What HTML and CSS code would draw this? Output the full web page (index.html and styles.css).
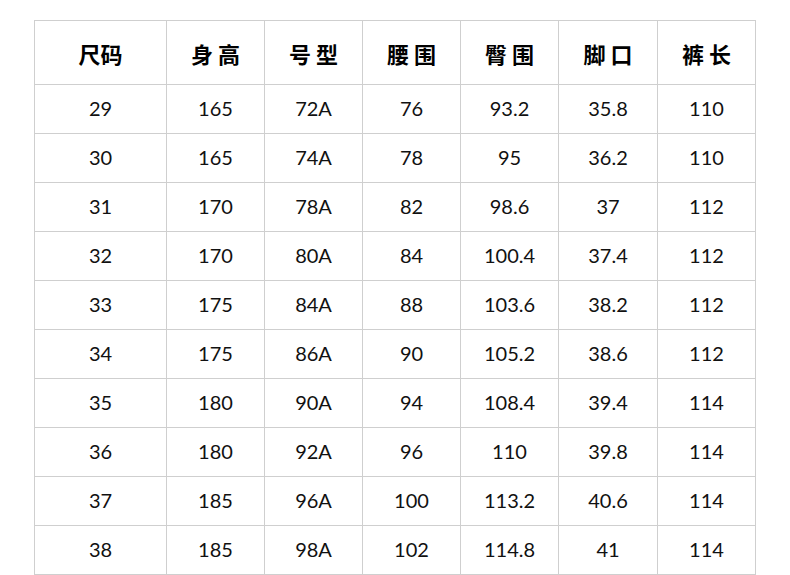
FILE: index.html
```html
<!DOCTYPE html>
<html lang="zh">
<head>
<meta charset="utf-8">
<title>尺码表</title>
<link rel="stylesheet" href="styles.css">
</head>
<body>
<table class="size-table">
  <colgroup>
    <col class="c-first">
    <col class="c"><col class="c"><col class="c"><col class="c"><col class="c-wide"><col class="c">
  </colgroup>
  <thead>
    <tr class="head">
      <th>尺码</th><th>身 高</th><th>号 型</th><th>腰 围</th><th>臀 围</th><th>脚 口</th><th>裤 长</th>
    </tr>
  </thead>
  <tbody>
    <tr><td>29</td><td>165</td><td>72A</td><td>76</td><td>93.2</td><td>35.8</td><td>110</td></tr>
    <tr><td>30</td><td>165</td><td>74A</td><td>78</td><td>95</td><td>36.2</td><td>110</td></tr>
    <tr><td>31</td><td>170</td><td>78A</td><td>82</td><td>98.6</td><td>37</td><td>112</td></tr>
    <tr><td>32</td><td>170</td><td>80A</td><td>84</td><td>100.4</td><td>37.4</td><td>112</td></tr>
    <tr><td>33</td><td>175</td><td>84A</td><td>88</td><td>103.6</td><td>38.2</td><td>112</td></tr>
    <tr><td>34</td><td>175</td><td>86A</td><td>90</td><td>105.2</td><td>38.6</td><td>112</td></tr>
    <tr><td>35</td><td>180</td><td>90A</td><td>94</td><td>108.4</td><td>39.4</td><td>114</td></tr>
    <tr><td>36</td><td>180</td><td>92A</td><td>96</td><td>110</td><td>39.8</td><td>114</td></tr>
    <tr><td>37</td><td>185</td><td>96A</td><td>100</td><td>113.2</td><td>40.6</td><td>114</td></tr>
    <tr><td>38</td><td>185</td><td>98A</td><td>102</td><td>114.8</td><td>41</td><td>114</td></tr>
  </tbody>
</table>
</body>
</html>
```
FILE: styles.css
```css
html, body {
  margin: 0;
  padding: 0;
  background: #fff;
}
body {
  padding: 20px 0 0 34px;
  font-family: Lato, "Noto Sans CJK SC", sans-serif;
  color: #111;
}
.size-table {
  border-collapse: collapse;
  table-layout: fixed;
  width: 722px;
}
.c-first { width: 132px; }
.c { width: 98px; }
.c-wide { width: 99px; }
.size-table th,
.size-table td {
  border: 1px solid #cfcfcf;
  padding: 0;
  text-align: center;
  vertical-align: middle;
}
.size-table th {
  height: 64px;
  font-family: "Noto Sans CJK SC", sans-serif;
  font-weight: 700;
  font-size: 22px;
  padding-top: 0;
  box-sizing: border-box;
  color: #000;
}
.size-table td {
  height: 46px;
  padding-bottom: 2px;
  font-size: 20px;
  font-weight: 400;
}
```
